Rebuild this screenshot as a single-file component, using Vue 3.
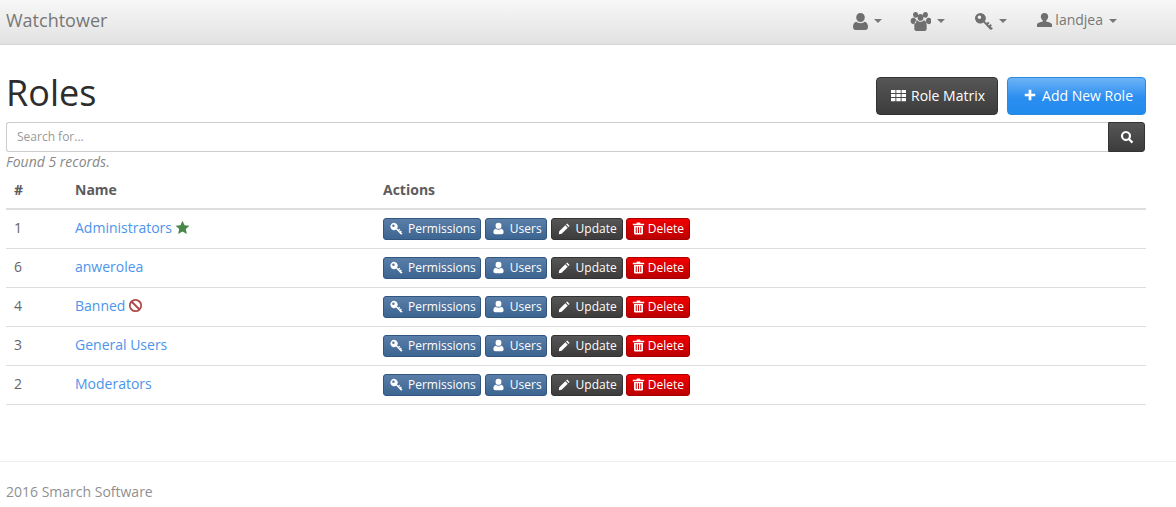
<script setup>
const icons = {
  user: 'M8 1a3.6 3.6 0 0 1 3.6 3.8A3.6 3.6 0 0 1 8 8.4a3.6 3.6 0 0 1-3.6-3.6A3.6 3.6 0 0 1 8 1zM4.6 8.2C5.5 9 6.6 9.4 8 9.4s2.5-.4 3.4-1.2c1.9.3 2.9 2 2.9 4.4 0 1.5-1 2.4-2.3 2.4H4c-1.300 0-2.300-.9-2.300-2.400 0-2.400 1-4.100 2.900-4.400z',
  person: 'M8 1C6 1 4.800 2.600 4.800 4.600c0 1.900 1 3.400 1.800 4v1C4.500 10.200 1.500 11 1.500 12.800V15h13v-2.200c0-1.800-3-2.600-5.100-3.200v-1c.8-.6 1.800-2.100 1.800-4C11.200 2.600 10 1 8 1z',
  group: 'M4 1.500a2 2 0 1 1 0 4 2 2 0 0 1 0-4zM12 1.500a2 2 0 1 1 0 4 2 2 0 0 1 0-4zM8 3a2.400 2.400 0 1 1 0 4.800A2.400 2.400 0 0 1 8 3zM1.800 5.600a2.300 2.300 0 1 1 0 4.500 2.300 2.300 0 0 1 0-4.500zM14.200 5.600a2.300 2.300 0 1 1 0 4.500 2.300 2.300 0 0 1 0-4.500zM5.300 7.300C6 8.100 7 8.500 8 8.500s2-.4 2.700-1.200c1.500.3 2.300 1.700 2.300 3.700v2.400c0 1-.8 1.600-1.700 1.600H4.700C3.800 15 3 14.400 3 13.400V11c0-2 .8-3.400 2.300-3.700z',
  key: 'M8.700 8.100L10.200 9.600 11.400 8.400 12.600 9.600 11.400 10.800 12.200 11.600 13.400 10.400 14.600 11.600 13.500 12.700 15.500 14 14.200 15.300 13 15 7.600 9.200A4.500 4.500 0 1 1 8.700 8.100zM4.200 3.100a1.500 1.500 0 1 0 0 3 1.500 1.500 0 0 0 0-3z',
  pencil: 'M11.300 1.800l3 3-1.400 1.400-3-3zM9 4l3 3-7.500 7.500L1 15l.5-3.500z',
  trash: 'M6 .6h4l.5 1.400H15v1.900H1V2h4.500zM2.500 4.800h11v9c0 .9-.7 1.600-1.600 1.600H4.100c-.9 0-1.600-.7-1.600-1.600zM4.600 6.500v7h1.200v-7zM7.400 6.500v7h1.200v-7zM10.200 6.500v7h1.200v-7z',
  star: 'M8 .8l2.200 4.800 5.200.6-3.900 3.500 1.100 5.200L8 12.300l-4.600 2.600 1.100-5.200L.6 6.200l5.200-.6z',
  ban: 'M8 1a7 7 0 1 1 0 14A7 7 0 0 1 8 1zM5.240 3.830A5 5 0 0 1 12.170 10.760zM10.760 12.170A5 5 0 0 1 3.830 5.240z',
  grid: 'M0 2h4.700v3.300H0zM5.700 2h4.600v3.300H5.700zM11.300 2H16v3.300h-4.700zM0 6.300h4.700v3.300H0zM5.700 6.300h4.600v3.300H5.700zM11.300 6.300H16v3.300h-4.700zM0 10.700h4.700V14H0zM5.700 10.700h4.600V14H5.700zM11.300 10.700H16V14h-4.700z',
  plus: 'M6.200 1h3.600v5.200H15v3.600H9.800V15H6.200V9.800H1V6.200h5.200z',
  search: 'M6.800 1a5.800 5.800 0 0 1 4.800 9l3.600 3.500-1.900 1.900-3.500-3.600A5.800 5.800 0 1 1 6.800 1zM6.800 3.500a3.300 3.300 0 1 0 0 6.600 3.300 3.300 0 0 0 0-6.600z'
}

const navItems = [
  { icon: 'user', box: '1.7 1 12.600 14' },
  { icon: 'group', box: '-0.500 1.500 17 13.500' },
  { icon: 'key', box: '0.500 1 15 14.500' }
]

const roles = [
  { id: 1, name: 'Administrators', badge: 'star' },
  { id: 6, name: 'anwerolea' },
  { id: 4, name: 'Banned', badge: 'ban' },
  { id: 3, name: 'General Users' },
  { id: 2, name: 'Moderators' }
]

const actions = [
  { label: 'Permissions', icon: 'key', kind: 'blue' },
  { label: 'Users', icon: 'user', kind: 'blue' },
  { label: 'Update', icon: 'pencil', kind: 'dark' },
  { label: 'Delete', icon: 'trash', kind: 'red' }
]
</script>

<template>
  <div class="app">
    <nav class="navbar">
      <a class="brand">Watchtower</a>
      <div class="nav-right">
        <a v-for="item in navItems" :key="item.icon" class="nav-link" :class="'nav-' + item.icon">
          <svg class="nav-icon" :viewBox="item.box" preserveAspectRatio="none"><path fill-rule="evenodd" :d="icons[item.icon]" /></svg>
          <span class="caret"></span>
        </a>
        <a class="nav-link nav-person">
          <svg class="nav-icon" viewBox="1.500 1 13 14" preserveAspectRatio="none"><path :d="icons.person" /></svg>
          <span class="uname">landjea</span>
          <span class="caret"></span>
        </a>
      </div>
    </nav>

    <main class="page">
      <header class="head">
        <h1>Roles</h1>
        <div class="head-btns">
          <button class="big dark">
            <svg class="ic" viewBox="0 0 16 16"><path :d="icons.grid" /></svg>
            Role Matrix
          </button>
          <button class="big primary">
            <svg class="ic" viewBox="0 0 16 16"><path :d="icons.plus" /></svg>
            Add New Role
          </button>
        </div>
      </header>

      <div class="search">
        <input type="text" placeholder="Search for..." />
        <button class="search-btn dark">
          <svg class="ic" viewBox="0 0 16 16"><path fill-rule="evenodd" :d="icons.search" /></svg>
        </button>
      </div>
      <p class="found">Found 5 records.</p>

      <table>
        <thead>
          <tr>
            <th class="c1">#</th>
            <th class="c2">Name</th>
            <th>Actions</th>
          </tr>
        </thead>
        <tbody>
          <tr v-for="role in roles" :key="role.id">
            <td>{{ role.id }}</td>
            <td>
              <a class="link">{{ role.name }}</a>
              <svg v-if="role.badge" class="badge" :class="role.badge" viewBox="0 0 16 16"><path fill-rule="evenodd" :d="icons[role.badge]" /></svg>
            </td>
            <td class="act-cell">
              <div class="actions">
                <button v-for="a in actions" :key="a.label" class="xs" :class="a.kind">
                  <svg class="ic" viewBox="0 0 16 16"><path fill-rule="evenodd" :d="icons[a.icon]" /></svg>
                  {{ a.label }}
                </button>
              </div>
            </td>
          </tr>
        </tbody>
      </table>
    </main>

    <footer class="footer">2016 Smarch Software</footer>
  </div>
</template>

<style scoped>
.app {
  font-family: "Open Sans", sans-serif;
  font-size: 14px;
  line-height: 20px;
  color: #666;
}
.navbar {
  display: flex;
  align-items: center;
  justify-content: space-between;
  padding: 0 59px 2px 6px;
  box-sizing: content-box;
  height: 42px;
  background: linear-gradient(#f7f7f7, #e2e2e2);
  border-bottom: 1px solid #d5d5d5;
}
.brand {
  font-size: 18px;
  color: #777;
  margin-bottom: 2px;
}
.nav-right {
  display: flex;
  align-items: center;
  gap: 30px;
}
.nav-link {
  display: flex;
  align-items: center;
  color: #777;
}
.nav-icon {
  fill: #6f6f6f;
  flex: none;
}
.nav-user { margin-right: -2px; }
.nav-user .nav-icon { width: 15px; height: 17px; }
.nav-group .nav-icon { width: 21px; height: 19px; }
.nav-key .nav-icon { width: 18px; height: 17px; }
.nav-person .nav-icon {
  width: 15px;
  height: 14px;
  margin: 0 3px 2px 0;
}
.uname {
  margin-bottom: 2px;
}
.caret {
  width: 0;
  height: 0;
  margin-left: 6px;
  border-top: 4px solid #777;
  border-left: 4px solid transparent;
  border-right: 4px solid transparent;
}
.page {
  padding: 0 30px 0 6px;
}
.head {
  display: flex;
  justify-content: space-between;
  align-items: flex-start;
  height: 77px;
  padding-top: 32px;
  box-sizing: border-box;
}
h1 {
  margin: -4px 0 0;
  font-size: 36px;
  font-weight: 400;
  line-height: 40px;
  color: #2d2d2d;
}
.head-btns {
  display: flex;
  gap: 9px;
}
button {
  font-family: inherit;
  color: #fff;
  cursor: pointer;
}
.ic {
  fill: #fff;
  flex: none;
}
.big {
  height: 38px;
  display: flex;
  align-items: center;
  padding: 0 12px 2px 14px;
  font-size: 14px;
  border-radius: 4px;
}
.big .ic {
  width: 15px;
  height: 15px;
  margin-right: 5px;
}
.big.primary {
  padding: 0 12px 2px 16px;
  background: linear-gradient(#6db3f7, #2b8ef0 55%, #208bec);
  border: 1px solid #2a8ae0;
}
.big.primary .ic {
  width: 12px;
  height: 12px;
  margin-right: 6px;
}
.dark {
  background: linear-gradient(#565656, #3c3c3c);
  border: 1px solid #333;
}
.search {
  display: flex;
  height: 30px;
}
input {
  flex: 1;
  min-width: 0;
  box-sizing: border-box;
  height: 30px;
  padding: 4px 10px 6px;
  font-family: inherit;
  font-size: 12px;
  color: #666;
  border: 1px solid #ccc;
  border-right: 0;
  border-radius: 3px 0 0 3px;
  outline: 0;
}
input::placeholder {
  color: #999;
  opacity: 1;
}
.search-btn {
  width: 37px;
  height: 30px;
  padding: 0;
  display: flex;
  align-items: center;
  justify-content: center;
  border-radius: 0 3px 3px 0;
  margin-right: 1px;
}
.search-btn .ic {
  width: 14px;
  height: 14px;
}
.found {
  margin: 0;
  height: 20px;
  font-size: 14px;
  font-style: italic;
  color: #888;
}
table {
  width: 100%;
  border-collapse: collapse;
  table-layout: fixed;
}
th {
  text-align: left;
  font-weight: 700;
  height: 37px;
  padding: 0 8px 1px;
  color: #5c5c5c;
  border-bottom: 2px solid #ddd;
  box-sizing: border-box;
}
.c1 { width: 61px; }
.c2 { width: 308px; }
td {
  height: 39px;
  padding: 0 8px 2px;
  border-bottom: 1px solid #ddd;
  box-sizing: border-box;
}
td.act-cell {
  padding: 0 8px;
}
.link {
  color: #4c94ec;
}
.badge {
  width: 15px;
  height: 15px;
  margin-left: 3px;
  vertical-align: -2px;
}
.badge.star { fill: #468847; }
.badge.ban { fill: #b04a4a; }
.actions {
  display: flex;
  gap: 4px;
}
.xs {
  height: 22px;
  display: flex;
  align-items: center;
  padding: 0 4px 0 6px;
  font-size: 12px;
  line-height: 18px;
  border-radius: 3px;
  white-space: nowrap;
}
.xs .ic {
  width: 13px;
  height: 13px;
  margin-right: 5px;
}
.xs.dark {
  padding-right: 5px;
}
.xs.blue {
  background: linear-gradient(#5a7ea8, #3c6591);
  border: 1px solid #315680;
}
.xs.red {
  background: linear-gradient(#f00000, #bb0000);
  border: 1px solid #a80000;
  margin-left: -1px;
  padding: 0 5px;
}
.xs.red .ic {
  margin-right: 3px;
}
.footer {
  margin-top: 56px;
  padding: 20px 6px 0;
  border-top: 1px solid #eee;
  color: #909090;
  height: 45px;
  box-sizing: border-box;
}
</style>
